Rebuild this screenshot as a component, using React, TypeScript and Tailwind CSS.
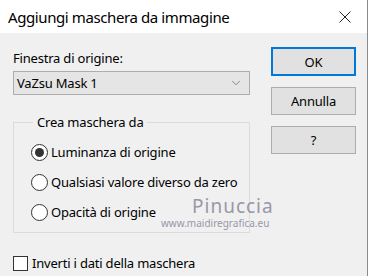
import { ChevronDown } from "lucide-react";

function Radio({ checked, label }: { checked?: boolean; label: string }) {
  return (
    <div className="flex h-[30px] items-center whitespace-nowrap">
      <span className="flex h-[17px] w-[17px] flex-none items-center justify-center rounded-full border border-[#333] bg-white">
        {checked && <span className="h-[9px] w-[9px] rounded-full bg-[#333]" />}
      </span>
      <span className="ml-[3px]">{label}</span>
    </div>
  );
}

function DialogButton({ children, primary }: { children: React.ReactNode; primary?: boolean }) {
  return (
    <button
      className={
        primary
          ? "h-[29px] w-[85px] border-2 border-[#0078d7] bg-[#e1e1e1] text-center"
          : "h-[28px] w-[85px] border border-[#adadad] bg-[#e1e1e1] text-center"
      }
    >
      {children}
    </button>
  );
}

export default function App() {
  return (
    <div
      className="relative h-[276px] w-[368px] overflow-hidden border-r border-[#8a8a8a] bg-[#f0f0f0] text-[13px] leading-[20px] tracking-[-0.2px] text-black"
      style={{ fontFamily: '"Noto Sans", "Open Sans", sans-serif' }}
    >
      <div className="flex h-[33px] items-center justify-between bg-white pl-[8px] pr-[16px]">
        <span className="text-[15px] tracking-[-0.4px]">Aggiungi maschera da immagine</span>
        <svg width="12" height="12" viewBox="0 0 12 12" className="text-[#222]">
          <path d="M0.5 0.5 L11.5 11.5 M11.5 0.5 L0.5 11.5" stroke="currentColor" strokeWidth="1" fill="none" />
        </svg>
      </div>

      <div className="flex pl-[13px] pt-[15px]">
        <div className="w-[237px]">
          <div>Finestra di origine:</div>
          <div className="mt-[3px] flex h-[24px] items-center justify-between border border-[#adadad] bg-[#e5e5e5] pl-[3px] pr-[6px]">
            <span>VaZsu Mask 1</span>
            <ChevronDown size={14} strokeWidth={1} className="text-[#444]" />
          </div>
          <fieldset className="mt-[17px] h-[121px] border border-[#dcdcdc] pl-[17px] pt-[5px]">
            <legend className="ml-[2px] px-[4px]">Crea maschera da</legend>
            <Radio checked label="Luminanza di origine" />
            <Radio label="Qualsiasi valore diverso da zero" />
            <Radio label="Opacità di origine" />
          </fieldset>
        </div>
        <div className="ml-[21px] mt-[-1px] flex flex-col gap-[11px]">
          <DialogButton primary>OK</DialogButton>
          <DialogButton>Annulla</DialogButton>
          <DialogButton>?</DialogButton>
        </div>
      </div>

      <div className="mt-[20px] flex items-center pl-[13px]">
        <span className="h-[15px] w-[15px] flex-none border border-[#333] bg-white" />
        <span className="ml-[4px]">Inverti i dati della maschera</span>
      </div>

      <div className="pointer-events-none absolute left-[161px] top-[195px] flex flex-col items-start text-[#9898a8]">
        <span className="ml-[31px] text-[19px] leading-[22px] tracking-[1px]">Pinuccia</span>
        <span className="mt-[1px] text-[10px] leading-[11px] tracking-[0px]">www.maidiregrafica.eu</span>
      </div>
    </div>
  );
}
